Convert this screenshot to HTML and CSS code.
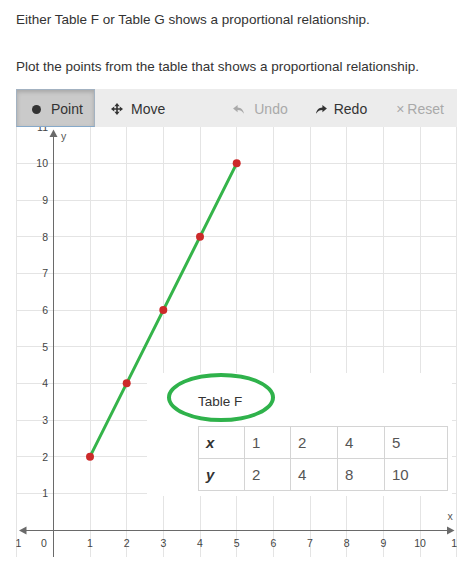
FILE: index.html
```html
<!DOCTYPE html>
<html lang="en">
<head>
<meta charset="utf-8">
<title>Proportional relationship</title>
<link rel="stylesheet" href="styles.css">
</head>
<body>
<main class="page">
  <p class="prompt first">Either Table F or Table G shows a proportional relationship.</p>
  <p class="prompt second">Plot the points from the table that shows a proportional relationship.</p>
  <div class="widget">
    <div class="toolbar">
      <button class="tool point"><span class="dot"></span>Point</button>
      <button class="tool move">
        <svg class="ico ico-move" width="12" height="12" viewBox="0 0 12 12"><path d="M6 0 L8.6 3.2 H6.8 V5.2 H8.8 V3.4 L12 6 L8.8 8.6 V6.8 H6.8 V8.8 H8.6 L6 12 L3.4 8.8 H5.2 V6.8 H3.2 V8.6 L0 6 L3.2 3.4 V5.2 H5.2 V3.2 H3.4 Z"/></svg>
        Move</button>
      <button class="tool undo off">
        <svg class="ico ico-undo" width="11" height="9" viewBox="0 0 12 10"><path d="M5 0 L0 4 L5 8 V5.6 C8 5.6 10 6.6 12 9.6 C11.6 5.6 9 3 5 2.8 Z"/></svg>
        Undo</button>
      <button class="tool redo">
        <svg class="ico ico-redo" width="11" height="9" viewBox="0 0 12 10"><path d="M7 0 L12 4 L7 8 V5.6 C4 5.6 2 6.6 0 9.6 C0.4 5.6 3 3 7 2.8 Z"/></svg>
        Redo</button>
      <button class="tool reset off"><span class="times">×</span>Reset</button>
    </div>
    <div class="board">
      <svg class="plane" width="441" height="430" viewBox="16 127 441 430">
        <g class="grid">
          <line x1="16.5" y1="127" x2="16.5" y2="557"/>
          <line x1="90.5" y1="127" x2="90.5" y2="557"/>
          <line x1="126.5" y1="127" x2="126.5" y2="557"/>
          <line x1="163.5" y1="127" x2="163.5" y2="557"/>
          <line x1="200.5" y1="127" x2="200.5" y2="557"/>
          <line x1="236.5" y1="127" x2="236.5" y2="557"/>
          <line x1="273.5" y1="127" x2="273.5" y2="557"/>
          <line x1="310.5" y1="127" x2="310.5" y2="557"/>
          <line x1="346.5" y1="127" x2="346.5" y2="557"/>
          <line x1="383.5" y1="127" x2="383.5" y2="557"/>
          <line x1="420.5" y1="127" x2="420.5" y2="557"/>
          <line x1="456.5" y1="127" x2="456.5" y2="557"/>
          <line x1="16" y1="126.5" x2="457" y2="126.5"/>
          <line x1="16" y1="163.5" x2="457" y2="163.5"/>
          <line x1="16" y1="200.5" x2="457" y2="200.5"/>
          <line x1="16" y1="236.5" x2="457" y2="236.5"/>
          <line x1="16" y1="273.5" x2="457" y2="273.5"/>
          <line x1="16" y1="310.5" x2="457" y2="310.5"/>
          <line x1="16" y1="346.5" x2="457" y2="346.5"/>
          <line x1="16" y1="383.5" x2="457" y2="383.5"/>
          <line x1="16" y1="420.5" x2="457" y2="420.5"/>
          <line x1="16" y1="456.5" x2="457" y2="456.5"/>
          <line x1="16" y1="493.5" x2="457" y2="493.5"/>
        </g>
        <g class="axes">
          <line x1="53.5" y1="135" x2="53.5" y2="557"/>
          <line x1="25" y1="530.5" x2="448" y2="530.5"/>
        </g>
        <g class="arrows">
          <polygon points="53.5,129.5 49.5,137 57.5,137"/>
          <polygon points="19,530.5 26.5,526.5 26.5,534.5"/>
          <polygon points="454.5,530.5 447,526.5 447,534.5"/>
        </g>
        <g class="ylabels">
          <text x="48" y="130.5">11</text>
          <text x="48" y="167.1">10</text>
          <text x="48" y="203.8">9</text>
          <text x="48" y="240.5">8</text>
          <text x="48" y="277.1">7</text>
          <text x="48" y="313.8">6</text>
          <text x="48" y="350.5">5</text>
          <text x="48" y="387.1">4</text>
          <text x="48" y="423.8">3</text>
          <text x="48" y="460.5">2</text>
          <text x="48" y="497.1">1</text>
        </g>
        <g class="xlabels">
          <text x="16.7" y="547">-1</text>
          <text x="44" y="547">0</text>
          <text x="90" y="547">1</text>
          <text x="126.7" y="547">2</text>
          <text x="163.3" y="547">3</text>
          <text x="200" y="547">4</text>
          <text x="236.7" y="547">5</text>
          <text x="273.3" y="547">6</text>
          <text x="310" y="547">7</text>
          <text x="346.7" y="547">8</text>
          <text x="383.3" y="547">9</text>
          <text x="420" y="547">10</text>
          <text x="456.7" y="547">11</text>
        </g>
        <text class="axis-name" x="61" y="140">y</text>
        <text class="axis-name" x="447.5" y="520">x</text>
        <line class="plot-line" x1="90" y1="456.7" x2="236.7" y2="163.3"/>
        <g class="points">
          <circle cx="90" cy="456.7" r="4"/>
          <circle cx="126.7" cy="383.3" r="4"/>
          <circle cx="163.3" cy="310" r="4"/>
          <circle cx="200" cy="236.7" r="4"/>
          <circle cx="236.7" cy="163.3" r="4"/>
        </g>
      </svg>
      <div class="overlay">
        <div class="table-label">Table F</div>
        <table class="data">
          <tr><th class="c1">x</th><td class="c2">1</td><td class="c3">2</td><td class="c4">4</td><td class="c5">5</td></tr>
          <tr><th class="c1">y</th><td class="c2">2</td><td class="c3">4</td><td class="c4">8</td><td class="c5">10</td></tr>
        </table>
      </div>
    </div>
  </div>
</main>
</body>
</html>
```
FILE: styles.css
```css
html, body {
  margin: 0;
  background: #ffffff;
}

body {
  font-family: "Liberation Sans", Arial, sans-serif;
  color: #333333;
}

.page {
  padding: 0 0 0 16px;
}

.prompt {
  margin: 0;
  font-size: 13.5px;
  line-height: 18px;
  color: #333333;
}

.first {
  padding-top: 11px;
}

.second {
  margin-top: 29px;
}

.widget {
  margin-top: 13px;
  width: 441px;
}

.toolbar {
  display: flex;
  height: 38px;
  background: #ececec;
}

.tool {
  display: flex;
  align-items: center;
  border: 0;
  background: none;
  margin: 0;
  padding: 2px 0 0 0;
  font-family: "Liberation Sans", Arial, sans-serif;
  font-size: 14px;
  color: #333333;
  cursor: pointer;
}

.tool.off {
  color: #a9a9a9;
}

.point {
  box-sizing: border-box;
  width: 79px;
  padding-left: 15px;
  background: #cacaca;
  border: 1px solid #a3b2c1;
  border-bottom-color: #86a9c9;
  box-shadow: inset 0 2px 4px rgba(0, 0, 0, 0.18);
}

.dot {
  width: 9px;
  height: 9px;
  border-radius: 50%;
  background: #333333;
  margin-right: 10px;
}

.ico {
  display: block;
  fill: currentColor;
}

.move {
  margin-left: 16px;
}

.ico-move {
  margin-right: 8px;
}

.undo {
  margin-left: 68px;
}

.ico-undo {
  margin-right: 10px;
}

.redo {
  margin-left: 28px;
}

.ico-redo {
  margin-right: 7px;
}

.reset {
  margin-left: 29px;
}

.times {
  margin-right: 3px;
}

.board {
  position: relative;
  height: 430px;
  overflow: hidden;
}

.plane {
  display: block;
}

.grid line {
  stroke: #e4e4e4;
  stroke-width: 1;
}

.axes line {
  stroke: #6a6a6a;
  stroke-width: 1;
}

.arrows polygon {
  fill: #6a6a6a;
}

.ylabels text {
  font-family: "Liberation Sans", Arial, sans-serif;
  font-size: 10.5px;
  fill: #444444;
  text-anchor: end;
}

.xlabels text {
  font-family: "Liberation Sans", Arial, sans-serif;
  font-size: 10.5px;
  fill: #444444;
  text-anchor: middle;
}

.axis-name {
  font-family: "Liberation Sans", Arial, sans-serif;
  font-size: 10.5px;
  fill: #555555;
}

.plot-line {
  stroke: #35b44a;
  stroke-width: 3;
  stroke-linecap: round;
}

.points circle {
  fill: #cc2a2a;
}

.overlay {
  position: absolute;
  left: 131px;
  top: 246px;
  width: 305px;
  height: 123px;
  background: #ffffff;
}

.table-label {
  box-sizing: border-box;
  width: 108px;
  height: 49px;
  margin-left: 20px;
  border: 4px solid #2fb24b;
  border-radius: 50%;
  padding: 17px 0 0 27px;
  font-size: 13.5px;
  line-height: 16px;
  color: #333333;
}

.data {
  margin: 4px 0 0 51px;
  border-collapse: collapse;
  width: 249px;
  table-layout: fixed;
}

.data th,
.data td {
  box-sizing: border-box;
  height: 32px;
  padding: 0 0 0 7px;
  border: 1px solid #d4d4d4;
  font-size: 15px;
  text-align: left;
  vertical-align: middle;
}

.data th {
  font-weight: bold;
  font-style: italic;
  color: #333333;
}

.data td {
  color: #555555;
}

.c1 { width: 46px; }
.c2 { width: 46px; }
.c3 { width: 47px; }
.c4 { width: 47px; }
.c5 { width: 63px; }
```
